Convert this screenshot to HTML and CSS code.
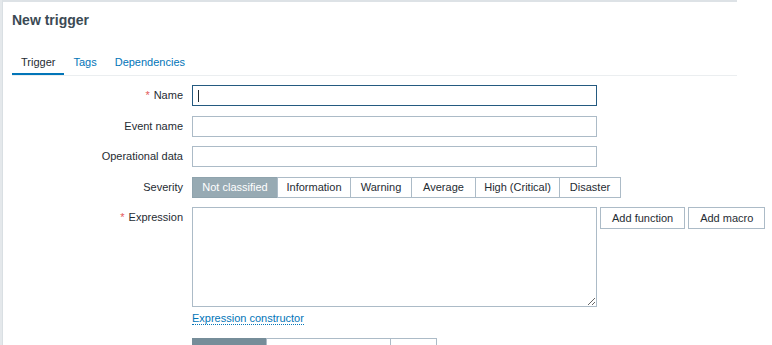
FILE: index.html
```html
<!DOCTYPE html>
<html lang="en">
<head>
    <meta charset="UTF-8">
    <meta name="viewport" content="width=device-width, initial-scale=1.0">
    <title>New trigger</title>
    <link rel="stylesheet" href="styles.css">
</head>
<body>
<div class="page">
    <div class="backdrop-edge"></div>

    <div class="dialog">
        <h4 class="dialog-title">New trigger</h4>

        <ul class="tabs">
            <li class="tab active">Trigger</li>
            <li class="tab">Tags</li>
            <li class="tab">Dependencies</li>
        </ul>

        <form class="form-grid">
            <label class="form-label required" for="name">Name</label>
            <div class="field">
                <div class="input-wrap">
                    <input type="text" id="name" class="text-input focused">
                    <span class="caret"></span>
                </div>
            </div>

            <label class="form-label" for="event_name">Event name</label>
            <div class="field">
                <input type="text" id="event_name" class="text-input">
            </div>

            <label class="form-label" for="opdata">Operational data</label>
            <div class="field">
                <input type="text" id="opdata" class="text-input">
            </div>

            <label class="form-label">Severity</label>
            <div class="field">
                <ul class="segmented severity">
                    <li class="selected">Not classified</li>
                    <li>Information</li>
                    <li>Warning</li>
                    <li>Average</li>
                    <li>High (Critical)</li>
                    <li>Disaster</li>
                </ul>
            </div>

            <label class="form-label required top" for="expression">Expression</label>
            <div class="field">
                <div class="expression-row">
                    <textarea id="expression" class="expression-box"></textarea>
                    <button type="button" class="btn-grey">Add function</button>
                    <button type="button" class="btn-grey">Add macro</button>
                </div>
                <a class="link-dotted">Expression constructor</a>
            </div>

            <label class="form-label tall">OK event generation</label>
            <div class="field">
                <ul class="segmented recovery">
                    <li class="selected">Expression</li>
                    <li>Recovery expression</li>
                    <li>None</li>
                </ul>
            </div>
        </form>
    </div>
</div>
</body>
</html>
```

FILE: styles.css
```css
html, body {
    margin: 0;
    height: 100%;
    overflow: hidden; /* dialog continues below the window */
    background: #fff;
}
body {
    font-family: Arial, "Liberation Sans", sans-serif;
    font-size: 11px;
    color: #1f2c33;
}
.page {
    display: flex;
    min-height: 100%;
}
.backdrop-edge {
    width: 2px;
    flex: none;
    background: #e4e8eb;
}
.dialog {
    width: 735px;
    flex: none;
    box-sizing: border-box;
    border-top: 2px solid #dde2e6;
    border-left: 1px solid #d9dfe3;
    padding: 9px 0 0 9px;
}
.dialog-title {
    margin: 0;
    font-size: 14px;
    line-height: 18px;
    font-weight: bold;
    color: #3b4a54;
}

/* tabs */
.tabs {
    list-style: none;
    margin: 26px 0 0;
    padding: 0;
    display: flex;
    border-bottom: 1px solid #ebeef0;
}
.tab {
    padding: 0 9px 4px;
    line-height: 14px;
    color: #0275b8;
    border-bottom: 2px solid transparent;
}
.tab.active {
    color: #1f2c33;
    border-bottom-color: #0275b8;
}

/* form */
.form-grid {
    display: grid;
    grid-template-columns: 171px max-content;
    column-gap: 9px;
    row-gap: 9.5px;
    margin-top: 9px;
    align-items: center;
}
.form-label {
    text-align: right;
    line-height: 21px;
    white-space: nowrap;
}
.form-label.top {
    align-self: start;
}
.form-label.tall {
    line-height: 28px;
}
.form-label.required::before {
    content: "*";
    color: #e45959;
    margin-right: 4px;
}
.text-input {
    display: block;
    width: 405px;
    height: 21px;
    box-sizing: border-box;
    border: 1px solid #acbbc7;
    padding: 0 5px;
    margin: 0;
    font: inherit;
    outline: none;
}
.text-input.focused {
    border-color: #245a80;
}
.input-wrap {
    position: relative;
}
.caret {
    position: absolute;
    left: 6px;
    top: 5px;
    width: 1px;
    height: 12px;
    background: #1f2c33;
}

/* segmented buttons */
.segmented {
    list-style: none;
    margin: 0;
    padding: 0;
    display: grid;
}
.segmented li {
    height: 21px;
    line-height: 19px;
    box-sizing: border-box;
    border: 1px solid #acbbc7;
    margin-left: -1px;
    text-align: center;
    white-space: nowrap;
    background: #fff;
}
.segmented li:first-child {
    margin-left: 0;
}
.severity {
    grid-template-columns: 86px 73px 61px 64px 84px 61px;
}
.severity li.selected {
    background: #97aab3;
    border-color: #8fa3ad;
    color: #fff;
}
.recovery {
    grid-template-columns: 75px 124px 46px;
}
.recovery li {
    height: 28px;
    line-height: 30px;
}
.recovery li.selected {
    background: #768d99;
    border-color: #768d99;
    color: #fff;
}

/* expression */
.expression-row {
    display: flex;
    align-items: flex-start;
}
.expression-box {
    display: block;
    width: 405px;
    height: 100px;
    box-sizing: border-box;
    border: 1px solid #acbbc7;
    margin: 0 3px 0 0;
    padding: 4px 5px;
    font: inherit;
    outline: none;
}
.btn-grey {
    height: 22px;
    padding: 0 11px;
    margin-right: 3px;
    border: 1px solid #acbbc7;
    background: #fff;
    color: #1f2c33;
    font: inherit;
    white-space: nowrap;
    cursor: pointer;
}
.link-dotted {
    display: inline-block;
    margin: 5px 0 3px;
    line-height: 12px;
    color: #0275b8;
    border-bottom: 1px dotted #0275b8;
    cursor: pointer;
}
```
